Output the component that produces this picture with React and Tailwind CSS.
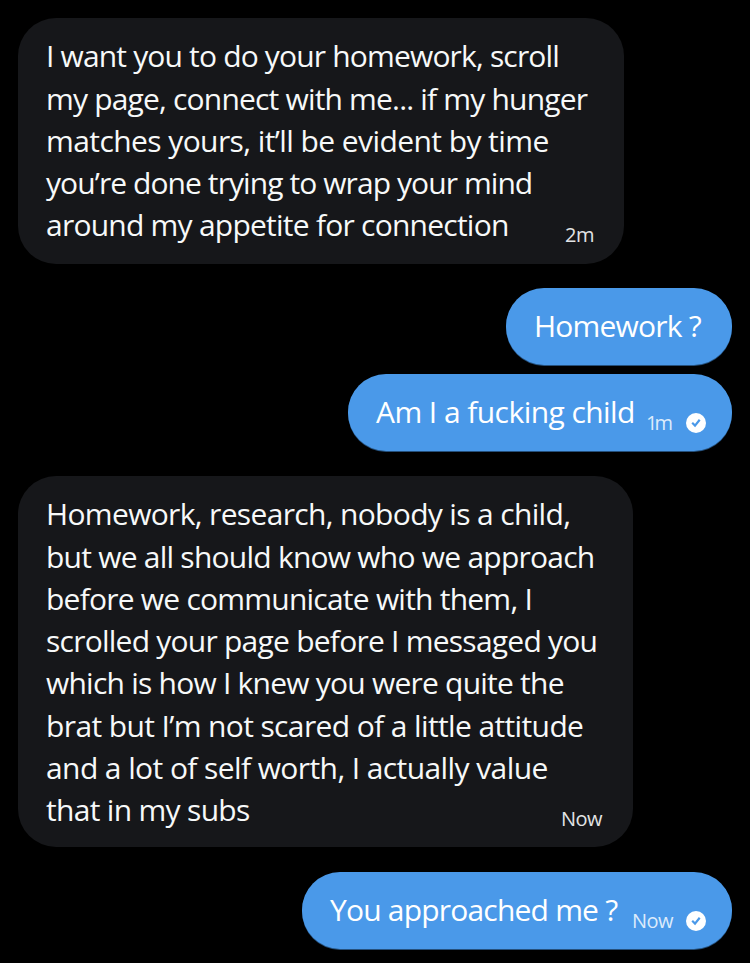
function Receipt() {
  return (
    <svg viewBox="0 0 20 20" className="mb-[18px] ml-[13px] h-5 w-5 shrink-0" aria-hidden="true">
      <circle cx="10" cy="10" r="10" fill="#fff" />
      <path d="M6.2 9.8 9 12.6 13.7 6.8" fill="none" stroke="#4a99e9" strokeWidth="2.2" />
    </svg>
  );
}

function Bubble({ className, lines, time, timeClass = "", receipt = false }) {
  return (
    <div className={`flex items-end rounded-[38px] pl-7 ${className}`}>
      <div className="h-full min-w-0 flex-1 pt-[17.25px] text-[30px] leading-[42.25px] whitespace-nowrap">
        {lines.map(([text, tracking]) => (
          <p key={text} className={tracking}>{text}</p>
        ))}
      </div>
      {time && (
        <span className={`shrink-0 text-[20px] leading-7 whitespace-nowrap ${timeClass}`}>
          {time}
        </span>
      )}
      {receipt && <Receipt />}
    </div>
  );
}

const received = "self-start bg-[#16171a] text-[#f7f9f9]";
const sent = "self-end bg-[#4a99e9] text-white pr-[26px] shadow-[0_1px_0_#25507c]";

export default function App() {
  return (
    <main className="flex h-[963px] w-full flex-col overflow-hidden bg-black px-[18px] pt-[18px] font-['Open_Sans',sans-serif]">
      <Bubble
        className={`h-[246px] w-[606px] pr-[30px] ${received}`}
        time="2m"
        timeClass="mb-[15px] tracking-[-0.5px] text-[#e2e4e5]"
        lines={[
          ["I want you to do your homework, scroll", "tracking-[-0.83px]"],
          ["my page, connect with me... if my hunger", "tracking-[-0.81px]"],
          ["matches yours, it’ll be evident by time", "tracking-[-0.58px]"],
          ["you’re done trying to wrap your mind", "tracking-[-0.92px]"],
          ["around my appetite for connection", "tracking-[-0.76px]"],
        ]}
      />
      <Bubble
        className={`mt-6 h-[77px] w-[226px] ${sent}`}
        lines={[["Homework ?", "tracking-[-0.8px]"]]}
      />
      <Bubble
        className={`mt-[9px] h-[77px] w-[384px] ${sent}`}
        time="1m"
        timeClass="mb-[14px] -mr-[3px] pr-[6px] tracking-[-3px] text-[#dcebfb]"
        receipt
        lines={[["Am I a fucking child", "tracking-[-0.56px]"]]}
      />
      <Bubble
        className={`mt-[25px] h-[371px] w-[615px] pr-[31px] ${received}`}
        time="Now"
        timeClass="mb-[14px] tracking-[-0.5px] text-[#e2e4e5]"
        lines={[
          ["Homework, research, nobody is a child,", "tracking-[-0.66px]"],
          ["but we all should know who we approach", "tracking-[-0.76px]"],
          ["before we communicate with them, I", "tracking-[-0.77px]"],
          ["scrolled your page before I messaged you", "tracking-[-0.76px]"],
          ["which is how I knew you were quite the", "tracking-[-0.77px]"],
          ["brat but I’m not scared of a little attitude", "tracking-[-0.62px]"],
          ["and a lot of self worth, I actually value", "tracking-[-0.59px]"],
          ["that in my subs", "tracking-[-0.69px]"],
        ]}
      />
      <Bubble
        className={`mt-[25px] h-[77px] w-[430px] ${sent}`}
        time="Now"
        timeClass="mb-[14px] tracking-[-0.5px] text-[#dcebfb]"
        receipt
        lines={[["You approached me ?", "tracking-[-0.8px]"]]}
      />
    </main>
  );
}
